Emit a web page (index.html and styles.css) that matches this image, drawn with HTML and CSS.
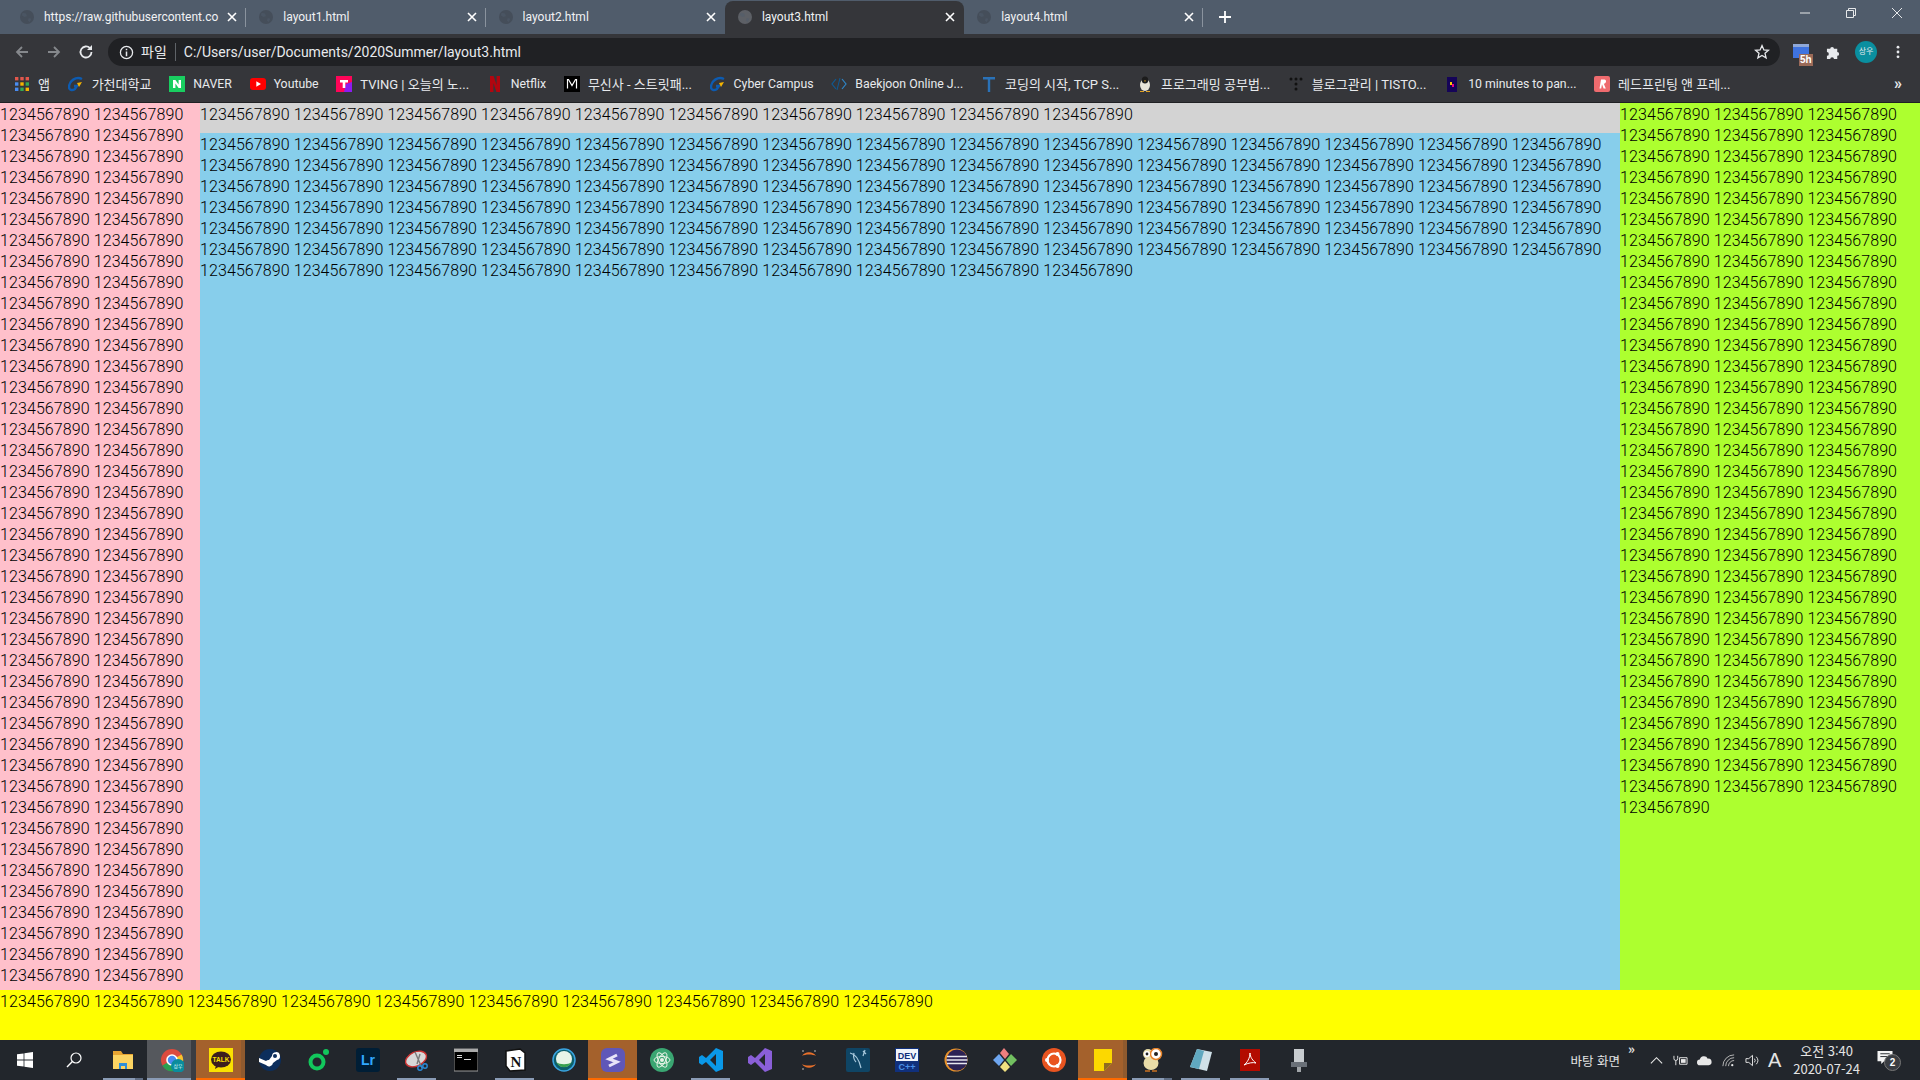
FILE: index.html
```html
<!DOCTYPE html>
<html lang="ko">
<head>
    <meta charset="UTF-8">
    <title>layout3.html</title>
    <link rel="stylesheet" href="styles.css">
</head>
<body>
<div class="tabs">
    <div class="tab"><svg class="fav"><use href="#globe"/></svg><span class="tab-t">https://raw.githubusercontent.co</span><svg class="x" viewBox="0 0 10 10"><path d="M1 1l8 8M9 1L1 9" stroke="#fff" stroke-width="1.6"/></svg></div>
    <div class="tab"><svg class="fav"><use href="#globe"/></svg><span class="tab-t">layout1.html</span><svg class="x" viewBox="0 0 10 10"><path d="M1 1l8 8M9 1L1 9" stroke="#fff" stroke-width="1.6"/></svg></div>
    <div class="tab no-line"><svg class="fav"><use href="#globe"/></svg><span class="tab-t">layout2.html</span><svg class="x" viewBox="0 0 10 10"><path d="M1 1l8 8M9 1L1 9" stroke="#fff" stroke-width="1.6"/></svg></div>
    <div class="tab on"><svg class="fav"><use href="#globe"/></svg><span class="tab-t">layout3.html</span><svg class="x" viewBox="0 0 10 10"><path d="M1 1l8 8M9 1L1 9" stroke="#fff" stroke-width="1.6"/></svg></div>
    <div class="tab"><svg class="fav"><use href="#globe"/></svg><span class="tab-t">layout4.html</span><svg class="x" viewBox="0 0 10 10"><path d="M1 1l8 8M9 1L1 9" stroke="#fff" stroke-width="1.6"/></svg></div>
    <svg class="plus" viewBox="0 0 12 12"><path d="M6 0v12M0 6h12" stroke="#fff" stroke-width="1.8"/></svg>
    <div class="win">
        <svg viewBox="0 0 12 12"><path d="M1 6h10" stroke="#e6e8ea"/></svg>
        <svg viewBox="0 0 12 12"><path d="M1.5 3.5h7v7h-7zM3.5 3.5v-2h7v7h-2" fill="none" stroke="#e6e8ea"/></svg>
        <svg viewBox="0 0 12 12"><path d="M1 1l10 10M11 1L1 11" stroke="#e6e8ea"/></svg>
    </div>
</div>

<div class="toolbar">
    <svg class="nav" viewBox="0 0 16 16"><path d="M14 8H3M8 3L3 8l5 5" fill="none" stroke="#85888c" stroke-width="1.8"/></svg>
    <svg class="nav" viewBox="0 0 16 16"><path d="M2 8h11M8 3l5 5-5 5" fill="none" stroke="#85888c" stroke-width="1.8"/></svg>
    <svg class="nav" viewBox="0 0 16 16"><path d="M13.5 8A5.5 5.5 0 1 1 12 4.2" fill="none" stroke="#e8eaed" stroke-width="1.8"/><path d="M14 1v5H9z" fill="#e8eaed"/></svg>
    <div class="omni">
        <svg class="info" viewBox="0 0 16 16"><circle cx="8" cy="8" r="6.5" fill="none" stroke="#e8eaed" stroke-width="1.4"/><path d="M8 7v5M8 4v1.6" stroke="#e8eaed" stroke-width="1.6"/></svg>
        <span class="scheme">파일</span>
        <span class="url">C:/Users/user/Documents/2020Summer/layout3.html</span>
        <svg class="star" viewBox="0 0 16 16"><path d="M8 1.6l1.9 4.3 4.6.4-3.5 3 1.1 4.6L8 11.5l-4.1 2.4L5 9.3l-3.5-3 4.6-.4z" fill="none" stroke="#e8eaed" stroke-width="1.3"/></svg>
    </div>
    <div class="ext">
        <svg viewBox="0 0 16 16"><rect y="1" width="16" height="14" fill="#3f73e0"/><rect y="1" width="16" height="3" fill="#8fa8d8"/></svg>
        <span class="badge">5h</span>
    </div>
    <svg class="puzzle" viewBox="0 0 16 16"><path d="M1 4h3.5a2 2 0 1 1 4 0H12v3.5a2 2 0 1 1 0 4V15H8.5a2 2 0 1 0-4 0H1v-3.5a2 2 0 1 0 0-4z" fill="#e8eaed"/></svg>
    <span class="avatar">상우</span>
    <svg class="dots" viewBox="0 0 4 16"><circle cx="2" cy="2.5" r="1.6" fill="#e8eaed"/><circle cx="2" cy="8" r="1.6" fill="#e8eaed"/><circle cx="2" cy="13.5" r="1.6" fill="#e8eaed"/></svg>
</div>

<div class="bookmarks">
    <div class="bm"><svg class="bi" viewBox="0 0 16 16"><rect x="1" y="1" width="3.4" height="3.4" fill="#e2574c"/><rect x="6.3" y="1" width="3.4" height="3.4" fill="#e2574c"/><rect x="11.6" y="1" width="3.4" height="3.4" fill="#e2574c"/><rect x="1" y="6.3" width="3.4" height="3.4" fill="#4a8cf0"/><rect x="6.3" y="6.3" width="3.4" height="3.4" fill="#f5b400"/><rect x="11.6" y="6.3" width="3.4" height="3.4" fill="#34a853"/><rect x="1" y="11.6" width="3.4" height="3.4" fill="#4a8cf0"/><rect x="6.3" y="11.6" width="3.4" height="3.4" fill="#34a853"/><rect x="11.6" y="11.6" width="3.4" height="3.4" fill="#f5b400"/></svg>앱</div>
    <div class="bm"><svg class="bi" viewBox="0 0 16 16"><use href="#gachon"/></svg>가천대학교</div>
    <div class="bm lat"><svg class="bi" viewBox="0 0 16 16"><rect width="16" height="16" fill="#19ce60"/><path d="M4 12V4h2.4l3.2 4.6V4H12v8H9.6L6.4 7.4V12z" fill="#fff"/></svg>NAVER</div>
    <div class="bm lat"><svg class="bi" viewBox="0 0 16 16"><rect y="2" width="16" height="12" rx="3" fill="#f00"/><path d="M6.3 5.2v5.6L11 8z" fill="#fff"/></svg>Youtube</div>
    <div class="bm"><svg class="bi" viewBox="0 0 16 16"><rect width="16" height="16" fill="#ff0558"/><path d="M10 8l6-2v10H8z" fill="#8b1cf0"/><path d="M4 4h8v2.4H9.3V12H6.7V6.4H4z" fill="#fff"/></svg>TVING | 오늘의 노...</div>
    <div class="bm lat"><svg class="bi" viewBox="0 0 16 16"><path d="M3 0h3.600l3 9V0H13v16H9.400l-3-9v9H3z" fill="#b1060f"/></svg>Netflix</div>
    <div class="bm"><svg class="bi" viewBox="0 0 16 16"><rect width="16" height="16" fill="#000"/><path d="M3.500 12.500V3.500h1l3.500 6 3.500-6h1v9" fill="none" stroke="#fff" stroke-width="1.2"/></svg>무신사 - 스트릿패...</div>
    <div class="bm lat"><svg class="bi" viewBox="0 0 16 16"><use href="#gachon"/></svg>Cyber Campus</div>
    <div class="bm lat"><svg class="bi" viewBox="0 0 16 16"><path d="M5 3L1 8l4 5" fill="none" stroke="#0e5a94" stroke-width="1.2"/><path d="M6 14L9 2" stroke="#0e5a94"/><path d="M11 3l4 5-4 5" fill="none" stroke="#2f86c8" stroke-width="1.2"/></svg>Baekjoon Online J...</div>
    <div class="bm"><svg class="bi" viewBox="0 0 16 16"><path d="M2 1h12v2.400H9.200V16H6.800V3.400H2z" fill="#2a72b8"/></svg>코딩의 시작, TCP S...</div>
    <div class="bm"><svg class="bi" viewBox="0 0 16 16"><ellipse cx="8" cy="9" rx="5" ry="6" fill="#e8e4d8"/><ellipse cx="8" cy="4" rx="3.200" ry="3.600" fill="#1c1c1c"/><path d="M3 15h4v1H3zM9 15h4v1H9z" fill="#e0a020"/><path d="M7 4.500h2L8 6z" fill="#e0a020"/></svg>프로그래밍 공부법...</div>
    <div class="bm"><svg class="bi" viewBox="0 0 16 16" fill="#111"><circle cx="3" cy="3" r="1.5"/><circle cx="8" cy="3" r="1.5"/><circle cx="13" cy="3" r="1.5"/><circle cx="8" cy="8" r="1.5"/><circle cx="8" cy="13" r="1.5"/></svg>블로그관리 | TISTO...</div>
    <div class="bm lat"><svg class="bi" viewBox="0 0 16 16"><rect x="3" y="1" width="10" height="15" fill="#150458"/><rect x="6" y="6" width="2" height="3" fill="#ffca00"/><rect x="8" y="8" width="2" height="3" fill="#e70488"/></svg>10 minutes to pan...</div>
    <div class="bm"><svg class="bi" viewBox="0 0 16 16"><rect width="16" height="16" rx="2" fill="#ee6b6e"/><path d="M5.500 12.500L7 3.500h3.400c2.400 0 2.200 4-.6 4.300l2 4.700H9.600L8 8.200l-.8 4.300z" fill="#fff"/></svg>레드프린팅 앤 프레...</div>
    <span class="more">»</span>
</div>

<div class="page">
    <div class="cols">
        <div class="left" id="left"></div>
        <div class="main">
            <div class="head" id="head"></div>
            <div class="body" id="body"></div>
        </div>
        <div class="right" id="right"></div>
    </div>
    <div class="foot" id="foot"></div>
</div>

<div class="taskbar">
    <div class="tb"><svg viewBox="0 0 16 16"><path d="M0 2.300l6.600-.9v6.200H0zM7.400 1.300L16 0v7.600H7.400zM0 8.400h6.600v6.200L0 13.700zM7.400 8.400H16V16l-8.600-1.200z" fill="#fff"/></svg></div>
    <div class="tb"><svg viewBox="0 0 16 16"><circle cx="10" cy="6" r="5" fill="none" stroke="#fff" stroke-width="1.2"/><path d="M6.400 9.600L1 15" stroke="#fff" stroke-width="1.4"/></svg></div>
    <div class="tb open stack big"><svg viewBox="0 0 24 24"><path d="M2 3h8l2 3h10v3H2z" fill="#e8a532"/><rect x="2" y="7" width="20" height="14" fill="#fcd462"/><path d="M8 15h8v6h-2v-3h-4v3H8z" fill="#2e8fd8"/></svg></div>
    <div class="tb gray big"><svg viewBox="0 0 24 24"><circle cx="12" cy="12" r="11" fill="#dd4b3e"/><path d="M12 12L2.400 17.500A11 11 0 0 0 14 23z" fill="#2aa050"/><path d="M12 12l9.600-5.500A11 11 0 0 1 14 23z" fill="#f7c52c"/><circle cx="12" cy="12" r="5" fill="#4a8af0" stroke="#fff" stroke-width="1.6"/><circle cx="18" cy="18" r="7" fill="#0b8c9c"/><text x="18" y="20" class="mini">상우</text></svg></div>
    <div class="tb alert strip big"><svg viewBox="0 0 24 24"><rect width="24" height="24" fill="#fae100"/><ellipse cx="12" cy="11.500" rx="10" ry="8" fill="#3c1e1e"/><path d="M7 17l-1 4 5-3z" fill="#3c1e1e"/><text x="12" y="14" class="talk">TALK</text></svg></div>
    <div class="tb big"><svg viewBox="0 0 24 24"><circle cx="12" cy="12" r="11" fill="#0c2e5c"/><path d="M1 14l7 3a4 4 0 0 0 7-2l4-3a4 4 0 1 0-5-4l-3 4a4 4 0 0 0-3 1L1 10z" fill="#fff"/><circle cx="17" cy="8" r="2" fill="#0c2e5c"/></svg></div>
    <div class="tb big"><svg viewBox="0 0 24 24"><circle cx="10" cy="14" r="6.500" fill="none" stroke="#12c75c" stroke-width="4"/><circle cx="19" cy="4" r="3" fill="#12c75c"/></svg></div>
    <div class="tb big"><svg viewBox="0 0 24 24"><rect width="24" height="24" rx="3" fill="#001e36"/><text x="12" y="17" class="lr">Lr</text></svg></div>
    <div class="tb open big"><svg viewBox="0 0 24 24"><ellipse cx="11" cy="11" rx="11" ry="7" transform="rotate(-25 11 11)" fill="#d8d8d8" stroke="#c33" stroke-width="1.4"/><path d="M10 4l7 16M15 6l-3 10" stroke="#7a7a7a" stroke-width="1.4"/><circle cx="15" cy="20" r="2.200" fill="none" stroke="#2a8ad8" stroke-width="1.4"/><circle cx="20" cy="18" r="2.200" fill="none" stroke="#2a8ad8" stroke-width="1.4"/></svg></div>
    <div class="tb big"><svg viewBox="0 0 24 24"><rect y="1" width="24" height="22" fill="#000" stroke="#9a9a9a"/><rect y="1" width="24" height="3" fill="#aaa"/><path d="M3 7h5v1H3zM3 9h5v1H3zM10 11h7v1h-7z" fill="#ddd"/></svg></div>
    <div class="tb open big"><svg viewBox="0 0 24 24"><path d="M3 3l14-2 5 4v17L7 23l-4-5z" fill="#fff" stroke="#111" stroke-width="1.500"/><text x="13" y="19" class="notion">N</text></svg></div>
    <div class="tb big"><svg viewBox="0 0 24 24"><circle cx="12" cy="12" r="11" fill="#0d5f6c"/><circle cx="12" cy="12" r="11" fill="none" stroke="#3aa4e0" stroke-width="1.500"/><circle cx="12" cy="11" r="8" fill="#e8f4e8"/><path d="M4 14c4 7 12 7 16 0-4 3-12 3-16 0z" fill="#3aa050"/></svg></div>
    <div class="tb alert big"><svg viewBox="0 0 24 24"><rect width="24" height="24" rx="6" fill="#5f57b8"/><path d="M16 7l-8 4 8 3-8 4" fill="none" stroke="#e8e4f8" stroke-width="3"/></svg></div>
    <div class="tb big"><svg viewBox="0 0 24 24"><circle cx="12" cy="12" r="12" fill="#3aa672"/><circle cx="12" cy="12" r="2" fill="#e8f4e8"/><ellipse cx="12" cy="12" rx="8" ry="3.500" fill="none" stroke="#e8f4e8"/><ellipse cx="12" cy="12" rx="8" ry="3.500" transform="rotate(60 12 12)" fill="none" stroke="#e8f4e8"/><ellipse cx="12" cy="12" rx="8" ry="3.500" transform="rotate(120 12 12)" fill="none" stroke="#e8f4e8"/></svg></div>
    <div class="tb open big"><svg viewBox="0 0 24 24"><path d="M17 0l7 3v18l-7 3L7 14l-4 3-3-2v-6l3-2 4 3z" fill="#0a98e8"/><path d="M17 6v12l-6-6z" fill="#22262c"/></svg></div>
    <div class="tb big"><svg viewBox="0 0 24 24"><path d="M17 0l7 3v18l-7 3L7 14l-4 3-3-2v-6l3-2 4 3z" fill="#8a5fd8"/><path d="M17 6v12l-6-6z" fill="#22262c"/></svg></div>
    <div class="tb big"><svg viewBox="0 0 24 24"><path d="M5 8c3-5 11-5 14 0-3-2-11-2-14 0zM5 16c3 5 11 5 14 0-3 2-11 2-14 0z" fill="#e8702a"/><circle cx="6" cy="3" r="1" fill="#888"/><circle cx="18" cy="3" r="1" fill="#888"/><circle cx="6" cy="21" r="1" fill="#888"/></svg></div>
    <div class="tb big"><svg viewBox="0 0 24 24"><rect width="24" height="24" rx="2" fill="#0f4565"/><path d="M4 5c5 1 9 6 11 15M8 5c-1 4 0 7 2 9M17 3l3 3M19 2l-2 6" fill="none" stroke="#a8c8dc" stroke-width="1.200"/></svg></div>
    <div class="tb big"><svg viewBox="0 0 24 24"><rect width="24" height="24" fill="#10307c"/><rect x="1" y="1" width="22" height="12" fill="#f0f4fa"/><text x="12" y="11" class="dev">DEV</text><text x="12" y="22" class="dev blue">C++</text></svg></div>
    <div class="tb big"><svg viewBox="0 0 24 24"><circle cx="12" cy="12" r="11.500" fill="#e8922a"/><circle cx="13" cy="12" r="10.500" fill="#2c2255"/><path d="M3 8.500h20M2.500 12h21M3 15.500h20" stroke="#e8e8f0" stroke-width="1.400"/></svg></div>
    <div class="tb big"><svg viewBox="0 0 24 24"><path d="M12 11L7 5l4-5 5 6z" fill="#ee7f7f"/><path d="M6 6l5 6-5 6-6-6z" fill="#6ea6f0"/><path d="M18 6l6 6-6 6-5-6z" fill="#72c060"/><path d="M12 13l5 6-5 5-5-5z" fill="#f0e080"/></svg></div>
    <div class="tb big"><svg viewBox="0 0 24 24"><circle cx="12" cy="12" r="12" fill="#e95420"/><circle cx="12" cy="12" r="6.500" fill="none" stroke="#fff" stroke-width="2.200"/><circle cx="5" cy="12" r="2" fill="#fff"/><circle cx="15.500" cy="6" r="2" fill="#fff"/><circle cx="15.500" cy="18" r="2" fill="#fff"/></svg></div>
    <div class="tb alert strip big"><svg viewBox="0 0 24 24"><path d="M3 1h18v14l-8 8H3z" fill="#fcd800"/><path d="M13 23v-8h8z" fill="#8f6c20"/></svg></div>
    <div class="tb open stack big"><svg viewBox="0 0 24 24"><ellipse cx="11" cy="15" rx="7.500" ry="7" fill="#e8dca8"/><circle cx="8" cy="6" r="5" fill="#e8dca8"/><circle cx="16" cy="6" r="5.500" fill="#fff" stroke="#e8842a" stroke-width="1.500"/><circle cx="7" cy="6" r="3" fill="#fff"/><circle cx="7" cy="6" r="1.400" fill="#222"/><circle cx="16" cy="6" r="2" fill="#222"/><path d="M5 23h5M12 23h5" stroke="#c87020" stroke-width="1.500"/></svg></div>
    <div class="tb open big"><svg viewBox="0 0 24 24"><path d="M8 1l15 3-5 19L1 19z" fill="#cfe0e8"/><path d="M8 1L1 19l9 2 5-18z" fill="#60a8c0"/></svg></div>
    <div class="tb open big"><svg viewBox="0 0 24 24"><rect x="2" y="1" width="20" height="22" fill="#b30b00"/><path d="M12 5c0 5-3 10-6 12 4-2 9-3 12-2-3-2-6-6-6-10z" fill="none" stroke="#fff"/></svg></div>
    <div class="tb big"><svg viewBox="0 0 24 24"><rect x="7" y="1" width="10" height="14" fill="#c8ccd0"/><rect x="4" y="14" width="16" height="5" fill="#6a7078"/><rect x="10" y="19" width="4" height="5" fill="#a0a4a8"/></svg></div>

    <div class="tray">
        <span class="desk">바탕 화면</span>
        <span class="tb-more">»</span>
        <svg class="ti" viewBox="0 0 16 16"><path d="M2 11l6-6 6 6" fill="none" stroke="#e8e8e8" stroke-width="1.200"/></svg>
        <svg class="ti" viewBox="0 0 16 16"><path d="M7 5h8v7H7z" fill="none" stroke="#e8e8e8"/><rect x="8.500" y="6.500" width="5" height="4" fill="#e8e8e8"/><path d="M1 3v3a2 2 0 0 0 4 0V3M3 8v5" fill="none" stroke="#e8e8e8"/></svg>
        <svg class="ti" viewBox="0 0 16 16"><path d="M3 13a3 3 0 0 1 0-6 4.500 4.500 0 0 1 8.500-1 3.500 3.500 0 0 1 1 7z" fill="#e8e8e8"/></svg>
        <svg class="ti" viewBox="0 0 16 16"><path d="M2 14A12 12 0 0 1 14 2M5 14A9 9 0 0 1 14 5M8 14a6 6 0 0 1 6-6" fill="none" stroke="#bbb"/><circle cx="12" cy="13" r="1.200" fill="#e8e8e8"/></svg>
        <svg class="ti" viewBox="0 0 16 16"><path d="M1 6h3l4-3.500v11L4 10H1z" fill="none" stroke="#e8e8e8"/><path d="M10 6a3 3 0 0 1 0 4M12 4a6 6 0 0 1 0 8" fill="none" stroke="#e8e8e8"/></svg>
        <span class="ime">A</span>
        <div class="clock"><span>오전 3:40</span><span>2020-07-24</span></div>
        <div class="notify">
            <svg viewBox="0 0 16 16"><path d="M0 1h16v11H7l-3 3v-3H0z" fill="#f4f4f4"/><path d="M3 4h10M3 7h10" stroke="#22262c"/></svg>
            <span class="count">2</span>
        </div>
    </div>
</div>

<svg class="defs">
    <symbol id="globe" viewBox="0 0 16 16"><circle cx="8" cy="8" r="8" fill="currentColor"/><path d="M3 3l4 1 1 3-3 1-3-2zM10 9l3 1-2 4-2-2z" fill="#505c6b" opacity=".5"/></symbol>
    <symbol id="gachon" viewBox="0 0 16 16"><path d="M14 3C8 0 1 5 1 11c0 3 3 4 6 2l2-3H6" fill="none" stroke="#0d5bb0" stroke-width="2.400"/><path d="M9 7l5-1-3 5z" fill="#f5b400"/></symbol>
</svg>

<script src="fill.js"></script>
</body>
</html>
```

FILE: fill.js
```js
// fill the regions with the number text
function fill(id, n) {
    var s = [];
    for (var i = 0; i < n; i++) s.push("1234567890");
    document.getElementById(id).textContent = s.join(" ");
}
fill("left", 84);
fill("head", 10);
fill("body", 100);
fill("right", 100);
fill("foot", 10);
```

FILE: styles.css
```css
html,body{margin:0;padding:0}
body{
    width:1920px;
    height:1080px;
    overflow:hidden;
    display:flex;
    flex-direction:column;
    font-family:"Liberation Sans","Noto Sans CJK KR",sans-serif;
}
svg{display:block}
.defs{width:0;height:0;position:absolute}

/* tabs */
.tabs{
    height:34px;
    background:#505c6b;
    display:flex;
    align-items:flex-start;
    padding-left:7px;
    flex:none;
    font-size:12px;
}
.tab{
    width:239.3px;
    height:33px;
    margin-top:1px;
    box-sizing:border-box;
    padding:0 9px 2px 13px;
    display:flex;
    align-items:center;
    position:relative;
    color:#454e5a;
    border-radius:8px 8px 0 0;
    flex:none;
}
.tab::after{
    content:"";
    position:absolute;
    right:0;
    top:7px;
    height:19px;
    width:1px;
    background:#8a939e;
}
.no-line::after,.on::after{display:none}
.on{background:#35363a;color:#5d6066}
.fav{width:14px;height:14px;flex:none}
.tab-t{
    flex:1;
    margin:0 8px 0 10px;
    color:#f0f2f4;
    white-space:nowrap;
    overflow:hidden;
    font-family:"Roboto","Noto Sans CJK KR",sans-serif;
}
.x{width:10px;height:10px;flex:none}
.plus{width:12px;height:12px;margin:11px 0 0 16px;flex:none}
.win{
    margin-left:auto;
    display:flex;
    gap:34px;
    padding:7px 17px 0 0;
}
.win svg{width:12px;height:12px}

/* address bar */
.toolbar{
    height:32px;
    padding:2px 0 0 14px;
    background:#35363a;
    display:flex;
    align-items:center;
    flex:none;
}
.nav{width:16px;height:16px;margin-right:16px}
.omni{
    width:1672px;
    margin-left:-2px;
    height:28px;
    border-radius:14px;
    background:#202124;
    display:flex;
    align-items:center;
    padding-left:11px;
    box-sizing:border-box;
    color:#e8eaed;
    font-size:14px;
}
.info{width:15px;height:15px}
.scheme{margin-left:7px;padding-right:8px;border-right:1px solid #5f6368;line-height:18px}
.url{margin-left:8px;flex:1;font-family:"Roboto",sans-serif;font-size:14px}
.star{width:16px;height:16px;margin-right:10px}
.ext{width:18px;height:18px;margin-left:13px;position:relative}
.ext svg{width:16px;height:16px}
.badge{
    position:absolute;
    left:6px;
    top:11px;
    background:#9a6a58;
    color:#fff;
    font-size:10px;
    font-weight:bold;
    padding:0 1px;
    line-height:12px;
}
.puzzle{width:15px;height:15px;margin-left:15px}
.avatar{
    width:22px;
    height:22px;
    border-radius:50%;
    background:#0a8f9f;
    color:#e8eaed;
    font-size:8px;
    line-height:22px;
    text-align:center;
    margin-left:14px;
}
.dots{width:4px;height:14px;margin-left:19px}

/* bookmarks */
.bookmarks{
    height:31px;
    padding:0 0 3px 14px;
    background:#35363a;
    border-bottom:1px solid #202124;
    display:flex;
    align-items:center;
    color:#e8eaed;
    font-size:13px;
    gap:17.7px;
    flex:none;
    font-family:"Roboto","Noto Sans CJK KR",sans-serif;
    white-space:nowrap;
}
.bm{display:flex;align-items:center;gap:8px}
.lat{font-size:12.3px}
.bi{width:16px;height:16px;flex:none}
.more{margin-left:auto;padding-right:18px;font-size:16px;font-weight:bold}

/* page */
.page{
    flex:1;
    display:flex;
    flex-direction:column;
    font:300 16px/21px "Roboto",sans-serif;
    letter-spacing:.095px;
    color:#000;
    min-height:0;
}
.cols{height:887px;display:flex;flex:none}
.left{width:200px;background:pink;flex:none;overflow:hidden;padding-top:1px}
.main{width:1420px;flex:none;background:skyblue}
.head{height:29px;background:lightgray;padding-top:1px}
.body{padding-top:1px}
.right{flex:1;background:greenyellow;padding-top:1px}
.foot{flex:1;background:yellow;padding-top:1px}

/* taskbar */
.taskbar{
    height:40px;
    background:#22262c;
    display:flex;
    flex:none;
}
.tb{
    width:49px;
    flex:none;
    height:40px;
    box-sizing:border-box;
    display:flex;
    align-items:center;
    justify-content:center;
}
.tb svg{width:16px;height:16px}
.tb.big svg{width:24px;height:24px}
.open{background:linear-gradient(#8a9bb5,#8a9bb5) 5px 100%/39px 2px no-repeat}
.stack{background:linear-gradient(#8a9bb5,#8a9bb5) 5px 100%/32px 2px no-repeat,linear-gradient(#5f6d84,#5f6d84) 37px 100%/8px 2px no-repeat}
.gray{background:linear-gradient(#8a9bb5,#8a9bb5) 0 100%/44px 2px no-repeat,linear-gradient(90deg,#55585d 44px,#3a3d42 44px)}
.alert{background:#a4612c;box-shadow:inset 0 -2px 0 #ff6a00}
.strip{box-shadow:inset 0 -2px 0 #ff6a00,inset -4px 0 0 #8f5a2e}
.dev{font:bold 9px "Liberation Sans",sans-serif;text-anchor:middle;fill:#10307c}
.dev.blue{fill:#4a90e8}
.talk{font:bold 6.5px "Liberation Sans",sans-serif;text-anchor:middle;fill:#fae100}
.mini{font:5px "Noto Sans CJK KR",sans-serif;text-anchor:middle;fill:#dff}
.lr{font:bold 14px "Liberation Sans",sans-serif;text-anchor:middle;fill:#31a8ff}
.notion{font:bold 15px "Liberation Serif",serif;text-anchor:middle;fill:#111}
.tray{
    flex:1;
    display:flex;
    align-items:center;
    justify-content:flex-end;
    color:#e4e4e4;
    font-size:13px;
    font-family:"Noto Sans CJK KR",sans-serif;
}
.desk{margin-right:8px;font-size:12.5px}
.tb-more{margin:-24px 5px 0 0;font-size:13px;font-weight:bold}
.ti{width:15px;height:15px;margin-left:9px}
.ime{font:20px "Liberation Sans",sans-serif;margin-left:8px}
.clock{
    display:flex;
    flex-direction:column;
    align-items:center;
    margin-left:12px;
    line-height:18px;
}
.notify{width:28px;height:24px;position:relative;margin:0 15px 0 17px}
.notify svg{width:16px;height:15px;margin-top:2px}
.count{
    position:absolute;
    left:7px;
    top:6px;
    width:15px;
    height:15px;
    text-align:center;
    border-radius:50%;
    border:1px solid #777;
    background:#3a3d42;
    color:#fff;
    font:bold 10px/15px "Liberation Sans",sans-serif;
}
```
